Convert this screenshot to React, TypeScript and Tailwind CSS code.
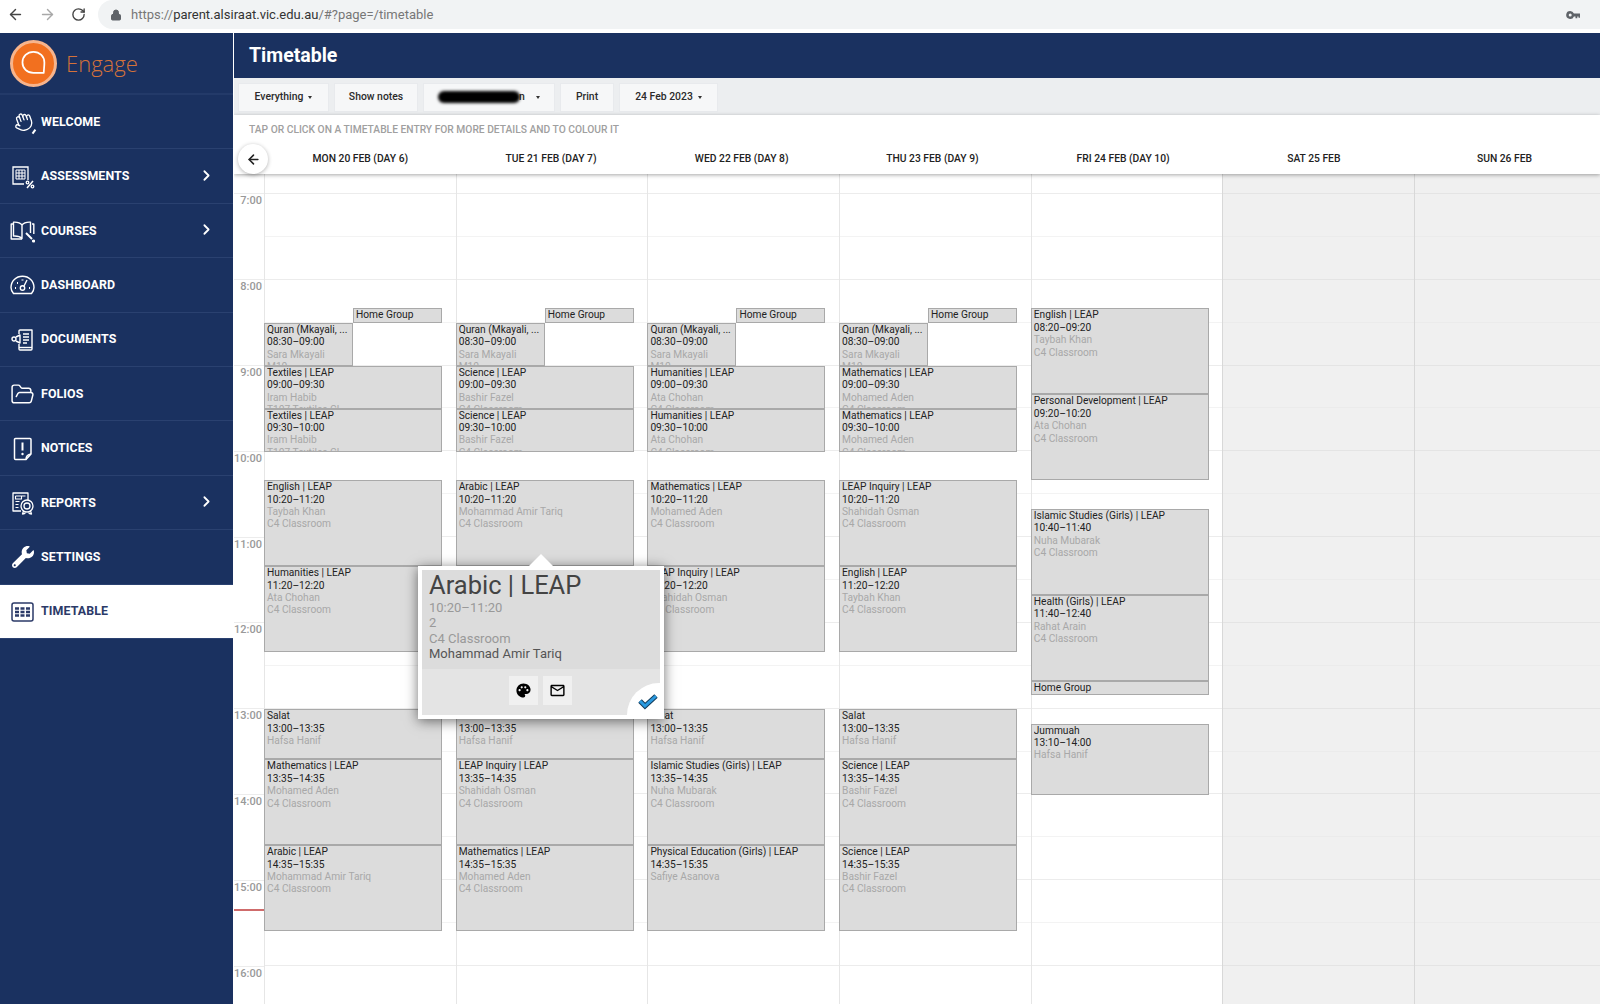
import React from 'react';
import { ArrowLeft, ArrowRight, ChevronRight, FolderOpen, Hand, Lock, RotateCw } from 'lucide-react';
import { FaWrench } from 'react-icons/fa';
import { MdMailOutline, MdPalette } from 'react-icons/md';

type Span = 'full' | 'left' | 'right';
interface Lesson { title: string; start: string; end: string; teacher?: string; room?: string; span?: Span; }
interface Day { label: string; weekend?: boolean; lessons: Lesson[]; }

const C4 = 'C4 Classroom';

const morning = (subject: string, teacher: string, room: string): Lesson[] => [
  { title: 'Home Group', start: '08:20', end: '08:30', span: 'right' },
  { title: 'Quran (Mkayali, ...', start: '08:30', end: '09:00', teacher: 'Sara Mkayali', room: 'M10', span: 'left' },
  { title: `${subject} | LEAP`, start: '09:00', end: '09:30', teacher, room },
  { title: `${subject} | LEAP`, start: '09:30', end: '10:00', teacher, room },
];

const days: Day[] = [
  {
    label: 'MON 20 FEB (DAY 6)',
    lessons: [
      ...morning('Textiles', 'Iram Habib', 'T107 Textiles Cl'),
      { title: 'English | LEAP', start: '10:20', end: '11:20', teacher: 'Taybah Khan', room: C4 },
      { title: 'Humanities | LEAP', start: '11:20', end: '12:20', teacher: 'Ata Chohan', room: C4 },
      { title: 'Salat', start: '13:00', end: '13:35', teacher: 'Hafsa Hanif' },
      { title: 'Mathematics | LEAP', start: '13:35', end: '14:35', teacher: 'Mohamed Aden', room: C4 },
      { title: 'Arabic | LEAP', start: '14:35', end: '15:35', teacher: 'Mohammad Amir Tariq', room: C4 },
    ],
  },
  {
    label: 'TUE 21 FEB (DAY 7)',
    lessons: [
      ...morning('Science', 'Bashir Fazel', C4),
      { title: 'Arabic | LEAP', start: '10:20', end: '11:20', teacher: 'Mohammad Amir Tariq', room: C4 },
      { title: 'Salat', start: '13:00', end: '13:35', teacher: 'Hafsa Hanif' },
      { title: 'LEAP Inquiry | LEAP', start: '13:35', end: '14:35', teacher: 'Shahidah Osman', room: C4 },
      { title: 'Mathematics | LEAP', start: '14:35', end: '15:35', teacher: 'Mohamed Aden', room: C4 },
    ],
  },
  {
    label: 'WED 22 FEB (DAY 8)',
    lessons: [
      ...morning('Humanities', 'Ata Chohan', C4),
      { title: 'Mathematics | LEAP', start: '10:20', end: '11:20', teacher: 'Mohamed Aden', room: C4 },
      { title: 'LEAP Inquiry | LEAP', start: '11:20', end: '12:20', teacher: 'Shahidah Osman', room: C4 },
      { title: 'Salat', start: '13:00', end: '13:35', teacher: 'Hafsa Hanif' },
      { title: 'Islamic Studies (Girls) | LEAP', start: '13:35', end: '14:35', teacher: 'Nuha Mubarak', room: C4 },
      { title: 'Physical Education (Girls) | LEAP', start: '14:35', end: '15:35', teacher: 'Safiye Asanova' },
    ],
  },
  {
    label: 'THU 23 FEB (DAY 9)',
    lessons: [
      ...morning('Mathematics', 'Mohamed Aden', C4),
      { title: 'LEAP Inquiry | LEAP', start: '10:20', end: '11:20', teacher: 'Shahidah Osman', room: C4 },
      { title: 'English | LEAP', start: '11:20', end: '12:20', teacher: 'Taybah Khan', room: C4 },
      { title: 'Salat', start: '13:00', end: '13:35', teacher: 'Hafsa Hanif' },
      { title: 'Science | LEAP', start: '13:35', end: '14:35', teacher: 'Bashir Fazel', room: C4 },
      { title: 'Science | LEAP', start: '14:35', end: '15:35', teacher: 'Bashir Fazel', room: C4 },
    ],
  },
  {
    label: 'FRI 24 FEB (DAY 10)',
    lessons: [
      { title: 'English | LEAP', start: '08:20', end: '09:20', teacher: 'Taybah Khan', room: C4 },
      { title: 'Personal Development | LEAP', start: '09:20', end: '10:20', teacher: 'Ata Chohan', room: C4 },
      { title: 'Islamic Studies (Girls) | LEAP', start: '10:40', end: '11:40', teacher: 'Nuha Mubarak', room: C4 },
      { title: 'Health (Girls) | LEAP', start: '11:40', end: '12:40', teacher: 'Rahat Arain', room: C4 },
      { title: 'Home Group', start: '12:40', end: '12:50' },
      { title: 'Jummuah', start: '13:10', end: '14:00', teacher: 'Hafsa Hanif' },
    ],
  },
  { label: 'SAT 25 FEB', weekend: true, lessons: [] },
  { label: 'SUN 26 FEB', weekend: true, lessons: [] },
];

const HOUR_PX = 85.87;
const GRID_OFFSET = 20;

const minutes = (t: string) => {
  const [h, m] = t.split(':').map(Number);
  return h * 60 + m;
};
const yOf = (t: string) => GRID_OFFSET + ((minutes(t) - 420) * HOUR_PX) / 60;

const GridIcon = () => (
  <svg width="24" height="24" viewBox="0 0 24 24" fill="none" stroke="currentColor" strokeWidth="1.3">
    <path d="M17 15V2H2v17h11" />
    <path d="M5 5h9v9H5zM8 5v9M11 5v9M5 8h9M5 11h9" strokeWidth="1" />
    <path d="M16 23l6-7" strokeWidth="1.5" />
    <circle cx="16.5" cy="17.5" r="1.3" />
    <circle cx="21.5" cy="21.5" r="1.3" />
  </svg>
);

const BookIcon = () => (
  <svg width="25" height="24" viewBox="0 0 25 24" fill="none" stroke="currentColor" strokeWidth="1.4" strokeLinejoin="round">
    <path d="M12 6C10 3.5 7 3 3.5 3.2V17c3.5-.2 6.5.3 8.5 2.5z" />
    <path d="M12 6c2-2.5 5-3 8.5-2.8V14" />
    <path d="M3.5 5H1.2v15H12" />
    <path d="M22 5h1.8v10" />
    <path d="M16 14l6 6" strokeWidth="2" />
    <circle cx="23.5" cy="22" r="0.9" fill="currentColor" />
  </svg>
);

const GaugeIcon = () => (
  <svg width="25" height="20" viewBox="0 0 25 20" fill="none" stroke="currentColor" strokeWidth="1.4">
    <path d="M3.5 18.5C1.8 16.5 1 14.5 1 12.5 1 6 6 1.2 12.5 1.2S24 6 24 12.5c0 2-.8 4-2.500 6z" />
    <circle cx="12.5" cy="13" r="2.2" />
    <path d="M14 11l3-6" />
    <path d="M5 13h1M7 8h1M12.5 4.5v1M19 13h1" strokeWidth="2" />
  </svg>
);

const DocumentIcon = () => (
  <svg width="24" height="24" viewBox="0 0 24 24" fill="none" stroke="currentColor" strokeWidth="1.4" strokeLinejoin="round">
    <path d="M8 6V3a1 1 0 0 1 1-1h12v19a1 1 0 0 1-1 1H9a1 1 0 0 1-1-1v-5" />
    <path d="M8 19.5h13" />
    <path d="M12 6h6M12 9h6M12 12h6M12 15h4" />
    <circle cx="3" cy="11" r="2" />
    <path d="M5 9l4-2v8l-4-2" />
  </svg>
);

const NoticeIcon = () => (
  <svg width="20" height="24" viewBox="0 0 20 24" fill="none" stroke="currentColor" strokeWidth="1.5" strokeLinejoin="round">
    <path d="M13 22.5H2.5a1 1 0 0 1-1-1V2.5a1 1 0 0 1 1-1H17a1 1 0 0 1 1 1V17z" />
    <path d="M13 22.5c0-3 1.5-5 5-5.5" />
    <path d="M9.5 5.5v8" strokeWidth="2" />
    <circle cx="9.5" cy="17" r="1.2" fill="currentColor" stroke="none" />
  </svg>
);

const ReportIcon = () => (
  <svg width="24" height="24" viewBox="0 0 24 24" fill="none" stroke="currentColor" strokeWidth="1.3" strokeLinejoin="round">
    <path d="M10 20H2V2h15v7" />
    <path d="M4.5 5h10M4.5 5v3h6V5M4.5 10.5h4M4.5 13.5h3M4.5 16.5h3" strokeWidth="1.1" />
    <circle cx="16" cy="15" r="6" />
    <circle cx="16" cy="15" r="3" />
    <path d="M12.5 20l-1 3 2-.5 1-1M19.5 20l1 3-2-.5-1-1" />
  </svg>
);

const CalendarIcon = () => (
  <svg width="23" height="20" viewBox="0 0 23 20" fill="none">
    <rect x="1" y="1" width="21" height="18" rx="2" stroke="currentColor" strokeWidth="1.5" />
    <path d="M4 6.5h15M4 10h15M4 13.5h15" stroke="currentColor" strokeWidth="2.4" strokeDasharray="4 1.5" />
  </svg>
);

const KeyIcon = () => (
  <svg width="14" height="10" viewBox="0 0 14 10" fill="#5f6368">
    <path d="M4.2 1a4 4 0 1 0 3.7 5.5h1.600v1.700h1.800V6.500h1.200v1.200H14V3.500H7.900A4 4 0 0 0 4.200 1zm0 2.500a1.500 1.500 0 1 1 0 3 1.500 1.500 0 0 1 0-3z" />
  </svg>
);

const WaveIcon = () => (
  <div className="relative flex h-6 w-6 items-center justify-center">
    <Hand size={20} strokeWidth={1.6} className="-rotate-[20deg]" />
    <span className="absolute bottom-0 right-0 h-[5px] w-[1.5px] rotate-[35deg] bg-white" />
  </div>
);

const navItems: { label: string; icon: React.ReactNode; more?: boolean; active?: boolean }[] = [
  { label: 'WELCOME', icon: <WaveIcon /> },
  { label: 'ASSESSMENTS', icon: <GridIcon />, more: true },
  { label: 'COURSES', icon: <BookIcon />, more: true },
  { label: 'DASHBOARD', icon: <GaugeIcon /> },
  { label: 'DOCUMENTS', icon: <DocumentIcon /> },
  { label: 'FOLIOS', icon: <FolderOpen size={25} strokeWidth={1.4} /> },
  { label: 'NOTICES', icon: <NoticeIcon /> },
  { label: 'REPORTS', icon: <ReportIcon />, more: true },
  { label: 'SETTINGS', icon: <FaWrench size={22} /> },
  { label: 'TIMETABLE', icon: <CalendarIcon />, active: true },
];

const BrowserBar = () => (
  <div className="flex h-[33px] shrink-0 items-start bg-white font-['Roboto',sans-serif]">
    <div className="flex h-[29px] w-[98px] shrink-0 items-center gap-[15px] pl-[7px]">
      <ArrowLeft size={17} className="text-[#444]" strokeWidth={2} />
      <ArrowRight size={17} className="text-[#a8a8a8]" strokeWidth={2} />
      <RotateCw size={15} className="text-[#444]" strokeWidth={2.2} />
    </div>
    <div className="flex h-[29px] flex-1 items-center rounded-l-full bg-[#f1f3f4] pl-[12px] pr-[20px]">
      <Lock size={12} className="text-[#5f6368]" fill="currentColor" strokeWidth={2} />
      <div className="ml-[9px] flex-1 text-[13px] text-[#777]">
        https://<span className="text-[#333]">parent.alsiraat.vic.edu.au</span>/#?page=/timetable
      </div>
      <KeyIcon />
    </div>
  </div>
);

const Sidebar = () => (
  <aside className="flex w-[233px] shrink-0 flex-col bg-[#1a3160] font-['Roboto',sans-serif]">
    <div className="flex h-[62px] items-center border-b-2 border-[#233a69] pl-[10px]">
      <div className="flex h-[47px] w-[47px] items-center justify-center rounded-full border-[3px] border-[#f7b48c] bg-[#f2701f]">
        <svg width="30" height="30" viewBox="0 0 26 26" fill="none" stroke="#fff" strokeWidth="1.5">
          <path d="M22 21.5H12.5C7 21.5 3 17.500 3 12.500S7 3.300 12.500 3.300 22 7.500 22 12.500c0 3.500-.5 6-.5 9" />
        </svg>
      </div>
      <span className="ml-[9px] font-['Open_Sans',sans-serif] text-[22px] font-light text-[#d4723a]">Engage</span>
    </div>
    {navItems.map(item => (
      <div
        key={item.label}
        className={`flex h-[54.4px] items-center border-b border-[#2a4170] pl-[10px] pt-[1px] ${item.active ? 'bg-white text-[#2b3a68]' : 'text-white'}`}
      >
        <div className="flex w-[25px] justify-center">{item.icon}</div>
        <span className="ml-[6px] flex-1 text-[12.4px] font-bold tracking-[0.1px]">{item.label}</span>
        {item.more && <ChevronRight size={17} strokeWidth={2.5} className="mb-[2px] mr-[18px]" />}
      </div>
    ))}
  </aside>
);

const ToolButton = ({ children, caret, className = '' }: { children: React.ReactNode; caret?: boolean; className?: string }) => (
  <div className={`mt-[1px] flex h-[29px] items-center justify-center border border-[#e8eaed] bg-[#f6f7f8] text-[10.4px] font-medium text-[#2b2b2b] ${className}`}>
    {children}
    {caret && <span className="ml-[5px] mt-[1px] h-0 w-0 border-x-[2px] border-t-[3px] border-x-transparent border-t-[#333]" />}
  </div>
);

const Toolbar = () => (
  <div className="flex h-[37px] items-center gap-[5px] bg-[#eceef0] pl-[4px]">
    <ToolButton caret className="w-[91px]">Everything</ToolButton>
    <ToolButton className="w-[84px]">Show notes</ToolButton>
    <ToolButton className="w-[132px]">
      <span className="h-[12px] w-[82px] rounded-full bg-black blur-[1.5px]" />
      <span className="-ml-[1px]">n</span>
      <span className="ml-[11px] h-0 w-0 border-x-[2px] border-t-[3px] border-x-transparent border-t-[#333]" />
    </ToolButton>
    <ToolButton className="w-[54px]">Print</ToolButton>
    <ToolButton caret className="w-[99px]">24 Feb 2023</ToolButton>
  </div>
);

const DayHeader = () => (
  <div className="relative z-10 bg-white shadow-[0_1px_4px_rgba(0,0,0,0.35)]">
    <div className="flex h-[29px] items-center pl-[15px] text-[10.25px] font-medium text-[#a0a0a0]">
      TAP OR CLICK ON A TIMETABLE ENTRY FOR MORE DETAILS AND TO COLOUR IT
    </div>
    <div className="flex h-[30px] items-center">
      <div className="relative w-[31px] shrink-0">
        <div className="absolute -top-[15px] left-[4px] flex h-[30px] w-[30px] items-center justify-center rounded-full bg-white shadow-[0_1px_4px_rgba(0,0,0,0.3)]">
          <ArrowLeft size={15} strokeWidth={2.5} className="text-[#222]" />
        </div>
      </div>
      {days.map(d => (
        <div key={d.label} className="w-[190.7px] shrink-0 text-center text-[10.3px] font-medium text-[#222]">{d.label}</div>
      ))}
    </div>
  </div>
);

const LessonTile = ({ lesson }: { lesson: Lesson }) => {
  const top = yOf(lesson.start);
  const height = yOf(lesson.end) - top;
  const span = lesson.span || 'full';
  const spanClass = span === 'left' ? 'left-[-1px] w-[89px]' : span === 'right' ? 'left-[88px] w-[89px]' : 'left-[-1px] w-[178px]';
  return (
    <div
      className={`absolute overflow-hidden border border-[#a9a9a9] bg-[#dcdcdc] px-[2px] text-[10.2px] leading-[12.4px] text-[#222] ${spanClass}`}
      style={{ top, height }}
    >
      <div className="truncate">{lesson.title}</div>
      {lesson.teacher && (
        <>
          <div>{lesson.start}–{lesson.end}</div>
          <div className="text-[#a8a8a8]">{lesson.teacher}</div>
          {lesson.room && <div className="text-[#a8a8a8]">{lesson.room}</div>}
        </>
      )}
    </div>
  );
};

const halfHours = Array.from({ length: 20 }, (_, i) => i);

const DayColumn = ({ day }: { day: Day }) => (
  <div className={`relative w-[191.7px] shrink-0 border-l ${day.weekend ? 'border-[#d8d8d8] bg-[#f0f0f0]' : 'border-[#e6e6e6] bg-white'}`}>
    <div className="h-[19px]" />
    {halfHours.map(i => (
      <div
        key={i}
        className={`h-[42.9px] border-t ${i % 2 === 0 ? (day.weekend ? 'border-[#e4e4e4]' : 'border-[#ececec]') : (day.weekend ? 'border-[#ebebeb]' : 'border-[#f3f3f3]')}`}
      />
    ))}
    {day.lessons.map(l => <LessonTile key={l.title + l.start} lesson={l} />)}
  </div>
);

const TimeGutter = () => (
  <div className="relative w-[30px] shrink-0 bg-white">
    <div className="h-[19px]" />
    {[7, 8, 9, 10, 11, 12, 13, 14, 15, 16].map(h => (
      <div key={h} className="h-[85.9px] border-t border-[#ececec] pr-[2px] pt-[1px] text-right text-[11px] font-medium leading-[12px] text-[#999]">
        {h}:00
      </div>
    ))}
    {/* current time marker */}
    <div className="absolute left-0 top-[735px] h-[2px] w-full bg-[#cf6b6b]" />
  </div>
);

const LessonPopup = () => (
  <div className="absolute left-[184px] top-[392px] z-20 h-[153px] w-[246px] border-[4px] border-white bg-[#dcdcdc] shadow-[0_2px_12px_rgba(0,0,0,0.55)]">
    <div className="absolute -top-[16px] left-[107px] h-0 w-0 border-x-[12px] border-b-[12px] border-x-transparent border-b-white" />
    <div className="h-[99px] pl-[7px] text-[13px] leading-[15.3px] text-[#999]">
      <div className="text-[25.5px] leading-[30px] text-[#444]">Arabic | LEAP</div>
      <div>10:20–11:20</div>
      <div>2</div>
      <div>C4 Classroom</div>
      <div className="text-[#555]">Mohammad Amir Tariq</div>
    </div>
    <div className="flex h-[46px] items-center justify-center gap-[5px] bg-[#e4e4e4] pb-[3px] pr-[1px]">
      <div className="flex h-[29px] w-[29px] items-center justify-center bg-[#f0f0f0]"><MdPalette size={17} className="text-black" /></div>
      <div className="flex h-[29px] w-[29px] items-center justify-center bg-[#f0f0f0]"><MdMailOutline size={17} className="text-black" /></div>
    </div>
    <div className="absolute -bottom-[4px] -right-[4px] flex h-[36px] w-[37px] items-end justify-end rounded-tl-[32px] bg-white">
      <svg width="22" height="18" viewBox="0 0 22 18" fill="none" className="mb-[9px] mr-[5px]">
        <path d="M3 9l5 5L19 4" stroke="#143d5c" strokeWidth="5" />
        <path d="M3 9l5 5L19 4" stroke="#2b9ae0" strokeWidth="3" />
      </svg>
    </div>
  </div>
);

const App: React.FC = () => (
  <div className="flex h-[1004px] w-[1600px] flex-col overflow-hidden bg-white">
    <BrowserBar />
    <div className="flex min-h-0 flex-1">
      <Sidebar />
      <main className="flex min-w-0 flex-1 flex-col overflow-hidden border-l border-white font-['Roboto',sans-serif]">
        <div className="flex h-[45px] shrink-0 items-center bg-[#1a3160] pl-[15px] text-[19.5px] font-bold text-white">Timetable</div>
        <Toolbar />
        <DayHeader />
        <div className="relative flex min-h-0 flex-1">
          <TimeGutter />
          {days.map(d => <DayColumn key={d.label} day={d} />)}
          <LessonPopup />
        </div>
      </main>
    </div>
  </div>
);

export default App;
